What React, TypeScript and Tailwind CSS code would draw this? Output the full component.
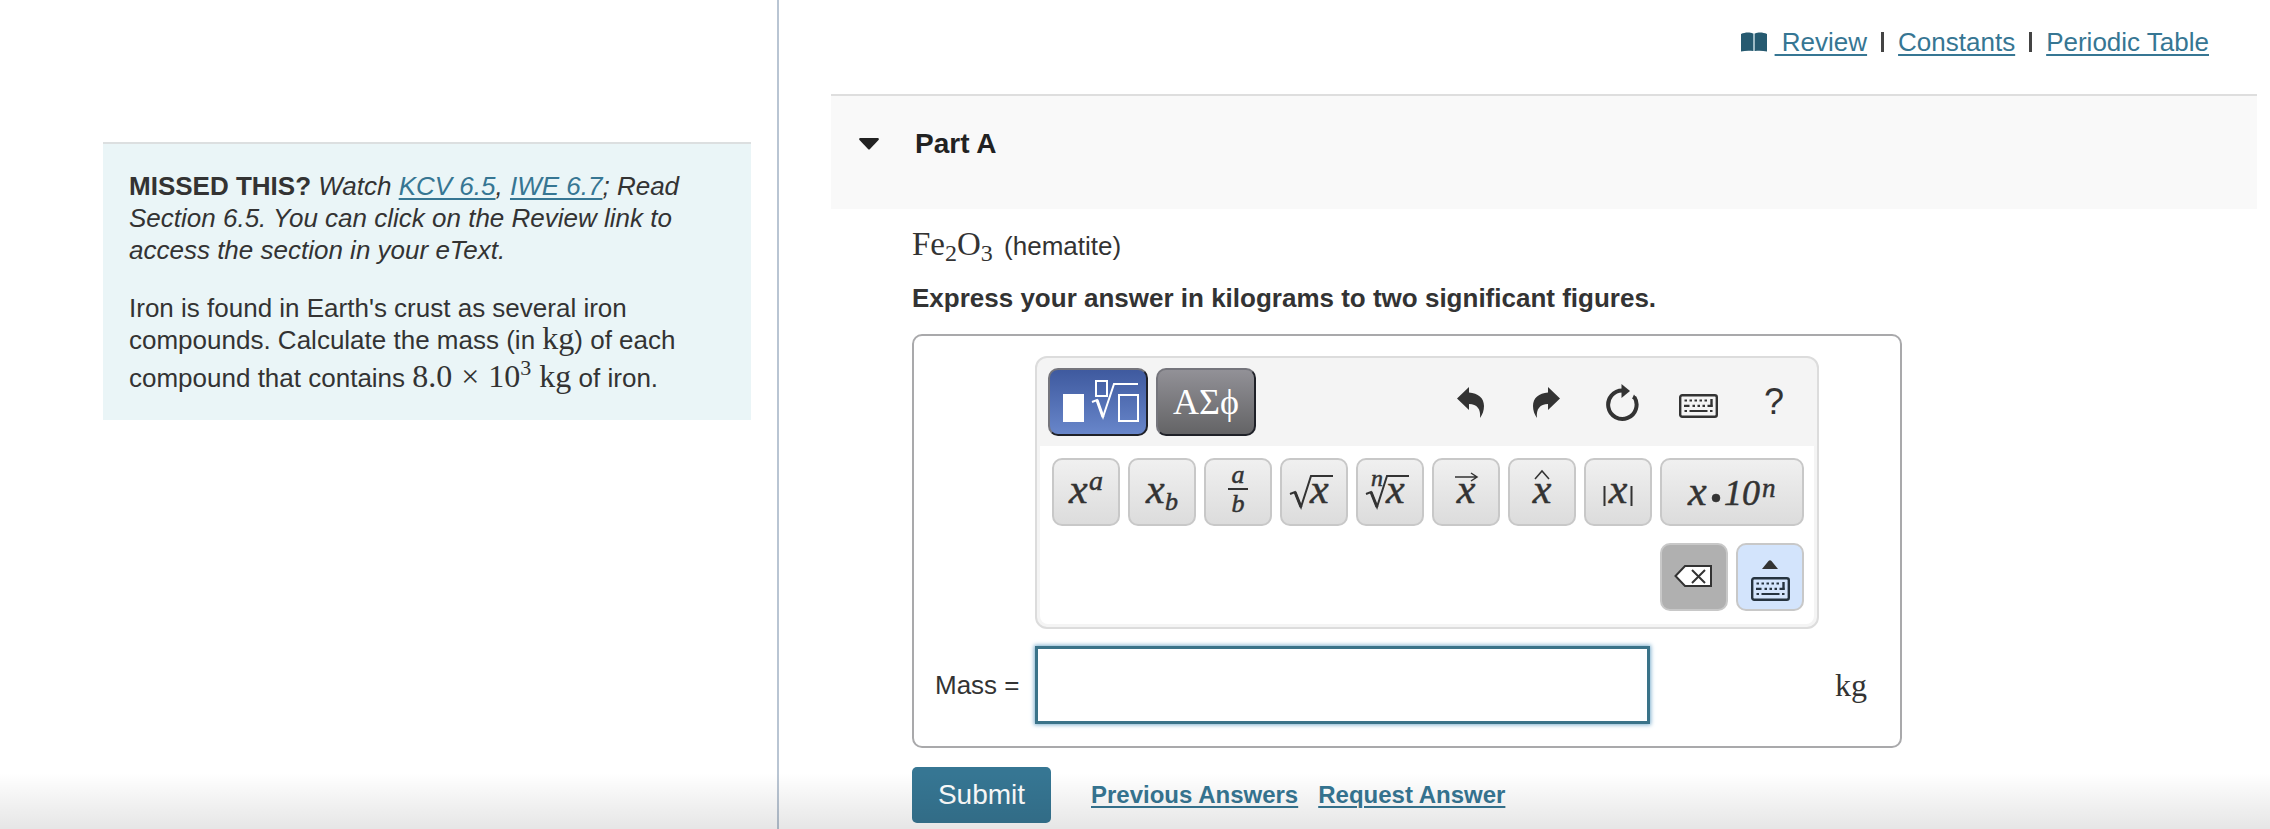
import { useState } from 'react';
import type { ReactNode } from 'react';

interface MathKey {
  label: string;
  glyph: ReactNode;
}

const mathFont = "font-['Liberation_Serif',serif]";

const MATH_KEYS: MathKey[] = [
  {
    label: 'Superscript',
    glyph: (
      <>
        <text x="17" y="45" fontSize="42">x</text>
        <text x="37" y="32" fontSize="28">a</text>
      </>
    ),
  },
  {
    label: 'Subscript',
    glyph: (
      <>
        <text x="18" y="45" fontSize="42">x</text>
        <text x="37" y="52" fontSize="26">b</text>
      </>
    ),
  },
  {
    label: 'Fraction',
    glyph: (
      <>
        <text x="34" y="25" fontSize="26" textAnchor="middle">a</text>
        <path d="M24 31H44" stroke="currentColor" strokeWidth="2" />
        <text x="34" y="54" fontSize="26" textAnchor="middle">b</text>
      </>
    ),
  },
  {
    label: 'Square root',
    glyph: (
      <>
        <path d="M10 36L15 34L21 49L31 18H53" fill="none" stroke="currentColor" strokeWidth="2" />
        <path d="M15 34L21 49" stroke="currentColor" strokeWidth="3" />
        <text x="30" y="45" fontSize="42">x</text>
      </>
    ),
  },
  {
    label: 'Nth root',
    glyph: (
      <>
        <path d="M10 36L15 34L21 49L31 18H53" fill="none" stroke="currentColor" strokeWidth="2" />
        <path d="M15 34L21 49" stroke="currentColor" strokeWidth="3" />
        <text x="15" y="28" fontSize="24">n</text>
        <text x="30" y="45" fontSize="42">x</text>
      </>
    ),
  },
  {
    label: 'Vector',
    glyph: (
      <>
        <path d="M23 19H44M39 15L45 19L39 23" fill="none" stroke="currentColor" strokeWidth="1.5" />
        <text x="34" y="45" fontSize="42" textAnchor="middle">x</text>
      </>
    ),
  },
  {
    label: 'Unit vector',
    glyph: (
      <>
        <path d="M27 21L34 13L41 21" fill="none" stroke="currentColor" strokeWidth="1.5" />
        <text x="34" y="45" fontSize="42" textAnchor="middle">x</text>
      </>
    ),
  },
  {
    label: 'Absolute value',
    glyph: (
      <>
        <path d="M20.5 28V48M47.5 28V48" stroke="currentColor" strokeWidth="2" />
        <text x="34" y="45" fontSize="42" textAnchor="middle">x</text>
      </>
    ),
  },
];

function KeyboardIcon() {
  return (
    <svg width="39" height="24" viewBox="0 0 39 24" fill="none" aria-hidden="true">
      <rect x="1.2" y="1.2" width="36.6" height="21.6" rx="2" stroke="currentColor" strokeWidth="2.4" />
      <path
        d="M5.5 6.5H8M10.5 6.5H13M15.5 6.5H18M20.5 6.5H23M25.5 6.5H28M5 11.8H10.5M13.5 11.8H16M18.5 11.8H21M23.5 11.8H26M28.5 11.8H33.5M5.5 17H8M10.5 17H28.5M31 17H33.5"
        stroke="currentColor"
        strokeWidth="2.2"
      />
      <path d="M32.5 5V12.9" stroke="currentColor" strokeWidth="2.4" />
    </svg>
  );
}

function UndoIcon({ flipped = false }: { flipped?: boolean }) {
  return (
    <svg className={flipped ? '-scale-x-100' : ''} width="27" height="31" viewBox="0 0 27 31" aria-hidden="true">
      <path d="M0 11.5L12 0V5.5C21 6 27 11 27 19C27 23.5 25.5 27.5 23 31C24 22 20 17 12 17V23Z" fill="currentColor" />
    </svg>
  );
}

function ResetIcon() {
  return (
    <svg width="33" height="37" viewBox="0 0 33 37" fill="none" aria-hidden="true">
      <path d="M16.5 6.5A14.2 14.2 0 1 0 28.3 13" stroke="currentColor" strokeWidth="4" />
      <path d="M15.5 0L24 7L15.5 14Z" fill="currentColor" />
      <path d="M28 10.5L30.5 14L26 15Z" fill="currentColor" />
    </svg>
  );
}

function BookIcon() {
  return (
    <svg width="26" height="20" viewBox="0 0 26 20" aria-hidden="true">
      <path d="M0 2C4 0 9 0 12 1.5V19C9 18.5 4 18.5 0 19.5Z" fill="#265a70" />
      <path d="M26 2C22 0 17 0 14 1.5V19C17 18.5 22 18.5 26 19.5Z" fill="#265a70" />
      <path d="M12 1.5H14V19H12Z" fill="#9dbac5" />
    </svg>
  );
}

const toolButton = 'flex h-[68px] w-[68px] items-center justify-center';
const mathButton = 'h-[68px] rounded-[10px] border-2 border-[#c8c8c8] bg-linear-to-b from-[#f0f0f0] to-[#dcdcdc]';
const linkStyle = 'text-[#367693] underline decoration-2 underline-offset-3';

function Toolbar() {
  return (
    <div className="rounded-xl border-2 border-[#dcdcdc] bg-[#f4f4f4]">
      <div className="flex h-[88px] items-center justify-between pr-[9px] pl-[11px]">
        <div className="flex gap-2">
          <button
            type="button"
            aria-label="Templates"
            className="h-[68px] w-[100px] rounded-[10px] border-2 border-t-[#75757c] border-r-[#1f2128] border-b-[#1f2128] border-l-[#75757c] bg-linear-to-b from-[#3f5a9f] to-[#6886ca]"
          >
            <svg className="block" width="96" height="64" viewBox="2 2 96 64" fill="none" stroke="#fff" strokeWidth="2" aria-hidden="true">
              <rect x="15" y="26" width="21" height="28" fill="#fff" stroke="none" />
              <rect x="48" y="13" width="11" height="15" />
              <path d="M44 34L49 32L55 49L66 16H90" />
              <path d="M49 32L55 49" strokeWidth="3" />
              <rect x="71" y="27" width="19" height="26" />
            </svg>
          </button>
          <button
            type="button"
            className={`${mathFont} h-[68px] w-[100px] rounded-[10px] border-2 border-t-[#75757c] border-r-[#1f2128] border-b-[#1f2128] border-l-[#75757c] bg-linear-to-b from-[#929197] to-[#646466] text-[36px] leading-[64px] text-white`}
          >
            ΑΣϕ
          </button>
        </div>
        <div className="flex gap-2 text-[#333]">
          <button type="button" aria-label="Undo" className={toolButton}><UndoIcon /></button>
          <button type="button" aria-label="Redo" className={toolButton}><UndoIcon flipped /></button>
          <button type="button" aria-label="Reset" className={toolButton}><ResetIcon /></button>
          <button type="button" aria-label="Keyboard shortcuts" className={`${toolButton} pt-2`}><KeyboardIcon /></button>
          <button type="button" className={`${toolButton} text-[36px]`}>?</button>
        </div>
      </div>

      <div className="mx-[3px] mb-[3px] rounded-b-lg bg-white pt-3 pr-[10px] pb-[13px] pl-3 text-[#333]">
        <div className="flex gap-2">
          {MATH_KEYS.map((key) => (
            <button key={key.label} type="button" aria-label={key.label} className={`${mathButton} w-[68px]`}>
              <svg className={`${mathFont} block italic`} width="64" height="64" viewBox="2 2 64 64" fill="currentColor" stroke="currentColor" strokeWidth="0.5">
                {key.glyph}
              </svg>
            </button>
          ))}
          <button type="button" aria-label="Scientific notation" className={`${mathButton} w-[144px]`}>
            <svg className={`${mathFont} block italic`} width="140" height="64" viewBox="2 2 140 64" fill="currentColor" stroke="currentColor" strokeWidth="0.5">
              <text x="28" y="47" fontSize="42">x</text>
              <circle cx="56" cy="40" r="4" />
              <text x="64" y="47" fontSize="36">10</text>
              <text x="102" y="39" fontSize="27">n</text>
            </svg>
          </button>
        </div>
        <div className="mt-[17px] flex justify-end gap-2">
          <button type="button" aria-label="Delete" className="h-[68px] w-[68px] rounded-[10px] border-2 border-[#c8c8c8] bg-[#b0b0b0]">
            <svg className="block" width="64" height="64" viewBox="2 2 64 64" fill="none" stroke="currentColor" strokeWidth="2" aria-hidden="true">
              <path d="M15.5 33L25 23H51V43H25Z" fill="#fff" />
              <path d="M32 27L45 40M45 27L32 40" />
            </svg>
          </button>
          <button
            type="button"
            aria-label="Hide keyboard"
            className="flex h-[68px] w-[68px] flex-col items-center gap-2 rounded-[10px] border-2 border-[#c8c8c8] bg-[#d3e4fc] pt-[15px] text-[#26333f]"
          >
            <svg width="16" height="9" viewBox="0 0 16 9" aria-hidden="true">
              <path d="M0 9L6.5 1Q8 -0.5 9.5 1L16 9Z" fill="#333" />
            </svg>
            <KeyboardIcon />
          </button>
        </div>
      </div>
    </div>
  );
}

export default function App() {
  const [mass, setMass] = useState<string>('');
  const [open, setOpen] = useState<boolean>(true);

  return (
    <div className="relative flex min-h-screen bg-white font-['Liberation_Sans',sans-serif] text-[26px] leading-[32px] text-[#333]">
      <div className="pointer-events-none absolute inset-x-0 bottom-0 h-14 bg-linear-to-b from-transparent to-black/10" />

      <aside className="w-[779px] shrink-0 border-r-2 border-[#b9c5d3] pt-[142px] pr-[26px] pl-[103px]">
        <div className="border-t-2 border-[#dcdfe0] bg-[#eaf5f7] p-[26px]">
          <p className="italic">
            <strong className="not-italic">MISSED THIS?</strong> Watch{' '}
            <a href="#kcv" className={linkStyle}>KCV 6.5</a>,{' '}
            <a href="#iwe" className={linkStyle}>IWE 6.7</a>; Read Section 6.5. You can click on the Review link to access the section in your eText.
          </p>
          <p className="mt-[26px]">
            Iron is found in Earth's crust as several iron compounds. Calculate the mass (in{' '}
            <span className={`${mathFont} text-[32px] leading-0`}>kg</span>) of each compound that contains{' '}
            <span className={`${mathFont} text-[32px] leading-0 whitespace-nowrap`}>
              8.0 <span className="mx-px">×</span> 10<sup className="top-auto align-[12px] text-[22px] leading-[24px]">3</sup> kg
            </span>{' '}
            of iron.
          </p>
        </div>
      </aside>

      <main className="flex-1 pt-[26px] pr-[13px] pl-[52px]">
        <nav className="flex items-center justify-end pr-12">
          <BookIcon />
          <a href="#review" className={`${linkStyle} ml-2 whitespace-pre`}> Review</a>
          <span className="mx-[14px] h-5 w-[3px] bg-[#444]" />
          <a href="#constants" className={linkStyle}>Constants</a>
          <span className="mx-[14px] h-5 w-[3px] bg-[#444]" />
          <a href="#periodic-table" className={linkStyle}>Periodic Table</a>
        </nav>

        <section className="mt-9">
          <header className="h-[115px] border-t-2 border-[#dedede] bg-[#f9f9f9] pt-8">
            <h2>
              <button
                type="button"
                aria-expanded={open}
                onClick={() => setOpen(!open)}
                className="flex items-center gap-9 pl-7 text-[28px] leading-[32px] font-bold text-[#222]"
              >
                <svg width="20" height="12" viewBox="0 0 20 12" aria-hidden="true">
                  <path d="M1 0H19Q20.5 0.5 19.5 2L11 11Q10 12 9 11L0.5 2Q-0.5 0.5 1 0Z" fill="#222" />
                </svg>
                Part A
              </button>
            </h2>
          </header>

          {open && (
            <div className="px-[81px] pt-[21px]">
              <p>
                <span className={`${mathFont} mr-1 text-[33px] leading-0`}>
                  Fe<sub className="text-[24px]">2</sub>O<sub className="text-[24px]">3</sub>
                </span>{' '}
                (hematite)
              </p>
              <p className="mt-5 font-bold">Express your answer in kilograms to two significant figures.</p>

              <form onSubmit={(e) => e.preventDefault()}>
                <div className="mt-5 grid max-w-[990px] grid-cols-[100px_1fr_82px] items-center gap-y-[17px] rounded-[10px] border-2 border-[#a9a9ab] pt-5 pb-[22px] pl-[21px]">
                  <div className="col-start-2">
                    <Toolbar />
                  </div>
                  <label htmlFor="mass" className="col-start-1">Mass =</label>
                  <input
                    id="mass"
                    type="text"
                    value={mass}
                    onChange={(e) => setMass(e.target.value)}
                    className="h-[78px] w-[615px] border-[3px] border-[#3a7389] bg-white px-3 shadow-[0_0_4px_1px_#7fb0cf] outline-none"
                  />
                  <span className={`${mathFont} pl-4 text-[32px]`}>kg</span>
                </div>

                <div className="mt-[19px] flex items-center pb-[6px]">
                  <button type="submit" className="h-14 w-[139px] rounded-[5px] bg-[#367693] text-[28px] text-white">
                    Submit
                  </button>
                  <a href="#previous" className={`${linkStyle} ml-10 text-2xl font-bold`}>Previous Answers</a>
                  <a href="#request" className={`${linkStyle} ml-5 text-2xl font-bold`}>Request Answer</a>
                </div>
              </form>
            </div>
          )}
        </section>
      </main>
    </div>
  );
}
